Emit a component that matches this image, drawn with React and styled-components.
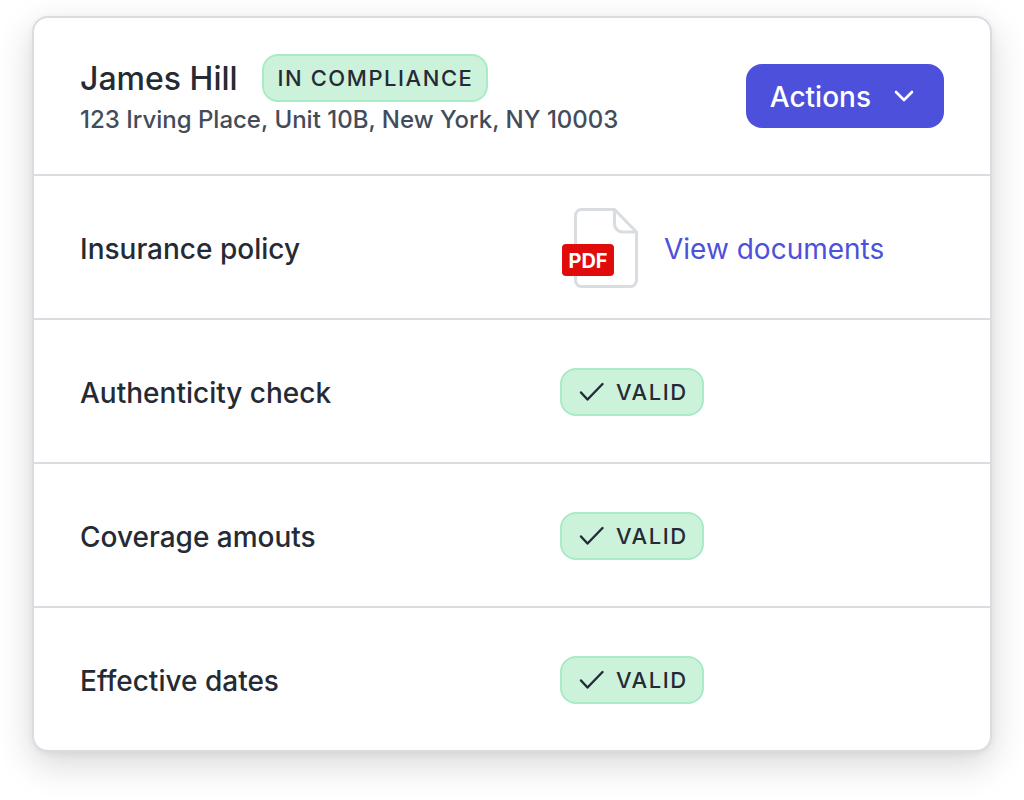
import React from "react";
import styled, { createGlobalStyle } from "styled-components";

const Global = createGlobalStyle`
  *, *::before, *::after { box-sizing: border-box; }
  body { margin: 0; background: #fff; color: #252b35; font-family: Inter, sans-serif; }
  h1, h2, p { margin: 0; font-weight: 500; }
`;

const Page = styled.main`
  padding: 16px 32px 48px;
`;

const Card = styled.article`
  border: 2px solid #d9dde2;
  border-radius: 16px;
  background: #fff;
  box-shadow: 0 12px 36px rgba(0, 0, 0, 0.16), 0 2px 6px rgba(0, 0, 0, 0.06);
`;

const Header = styled.header`
  display: flex;
  align-items: center;
  justify-content: space-between;
  padding: 36px 46px;
`;

const NameLine = styled.div`
  display: flex;
  align-items: center;
  gap: 24px;
`;

const Name = styled.h1`
  padding-top: 2px;
  font-size: 32px;
  line-height: 46px;
`;

const Address = styled.p`
  font-size: 24px;
  line-height: 36px;
  color: #434c5a;
`;

const Badge = styled.span`
  display: inline-flex;
  align-items: center;
  gap: 12px;
  height: 48px;
  padding: ${(p) => (p.$icon ? "0 14px 0 16px" : "0 13px 0 14px")};
  border: 2px solid #a9ebc5;
  border-radius: 16px;
  background: #cdf2dc;
  font-size: 22px;
  font-weight: 500;
  letter-spacing: 0.07em;
`;

const ActionsButton = styled.button`
  display: flex;
  align-items: center;
  gap: 22px;
  height: 64px;
  padding: 0 29px 0 24px;
  border: 0;
  border-radius: 16px;
  background: #4d50db;
  color: #fff;
  font: 500 28px Inter, sans-serif;
`;

const Caption = styled.span`
  padding-top: 2px;
`;

const Row = styled.section`
  display: grid;
  grid-template-columns: 480fr 384fr;
  align-items: center;
  height: 144px;
  padding: 2px 46px 0;
  border-top: 2px solid #d9dde2;
`;

const Label = styled.h2`
  padding-top: 2px;
  font-size: 28px;
  line-height: 40px;
`;

const Value = styled.div`
  display: flex;
`;

const Documents = styled.a`
  display: flex;
  align-items: center;
  gap: 26px;
  padding-left: 2px;
  color: #4d50db;
  font-size: 28px;
  text-decoration: none;
`;

const Check = () => (
  <svg width="26" height="20" viewBox="0 0 26 20" fill="none" stroke="#252b35" strokeWidth="2.4" strokeLinecap="round" strokeLinejoin="round" aria-hidden="true">
    <path d="M3 10.500 9.500 17.500 24.500 2" />
  </svg>
);

const Chevron = () => (
  <svg width="22" height="14" viewBox="0 0 22 14" fill="none" stroke="#fff" strokeWidth="2.6" strokeLinecap="round" strokeLinejoin="round" aria-hidden="true">
    <path d="m3 3 8 8 8-8" />
  </svg>
);

const PdfIcon = () => (
  <svg width="76" height="80" viewBox="0 0 76 80" aria-hidden="true">
    <path d="M19.500 1.500h33L74.500 24v48.500a6 6 0 0 1-6 6h-49a6 6 0 0 1-6-6v-65a6 6 0 0 1 6-6Z" fill="#fff" stroke="#d9dde2" strokeWidth="3" strokeLinejoin="round" />
    <path d="M52.500 1.500V16a8 8 0 0 0 8 8h14" fill="none" stroke="#d9dde2" strokeWidth="3" strokeLinejoin="round" />
    <rect y="36" width="52" height="32" rx="4" fill="#e00b0b" />
    <text x="26" y="60" textAnchor="middle" fill="#fff" fontFamily="Inter, sans-serif" fontSize="20" fontWeight="700">PDF</text>
  </svg>
);

const checks = ["Authenticity check", "Coverage amouts", "Effective dates"];

export default function App() {
  return (
    <>
      <Global />
      <Page>
        <Card>
          <Header>
            <div>
              <NameLine>
                <Name>James Hill</Name>
                <Badge>IN COMPLIANCE</Badge>
              </NameLine>
              <Address>123 Irving Place, Unit 10B, New York, NY 10003</Address>
            </div>
            <ActionsButton type="button">
              <Caption>Actions</Caption>
              <Chevron />
            </ActionsButton>
          </Header>
          <Row>
            <Label>Insurance policy</Label>
            <Value>
              <Documents href="#documents">
                <PdfIcon />
                <Caption>View documents</Caption>
              </Documents>
            </Value>
          </Row>
          {checks.map((label) => (
            <Row key={label}>
              <Label>{label}</Label>
              <Value>
                <Badge $icon>
                  <Check />
                  VALID
                </Badge>
              </Value>
            </Row>
          ))}
        </Card>
      </Page>
    </>
  );
}
